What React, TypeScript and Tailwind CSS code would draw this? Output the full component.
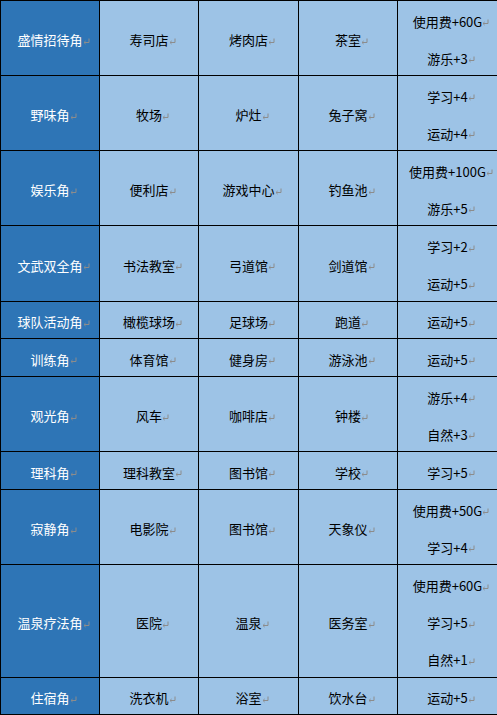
import React from "react"

interface Row {
  name: string
  places: string[]
  effects: string[]
}

const rows: Row[] = [
  { name: "盛情招待角", places: ["寿司店", "烤肉店", "茶室"], effects: ["使用费+60G", "游乐+3"] },
  { name: "野味角", places: ["牧场", "炉灶", "兔子窝"], effects: ["学习+4", "运动+4"] },
  { name: "娱乐角", places: ["便利店", "游戏中心", "钓鱼池"], effects: ["使用费+100G", "游乐+5"] },
  { name: "文武双全角", places: ["书法教室", "弓道馆", "剑道馆"], effects: ["学习+2", "运动+5"] },
  { name: "球队活动角", places: ["橄榄球场", "足球场", "跑道"], effects: ["运动+5"] },
  { name: "训练角", places: ["体育馆", "健身房", "游泳池"], effects: ["运动+5"] },
  { name: "观光角", places: ["风车", "咖啡店", "钟楼"], effects: ["游乐+4", "自然+3"] },
  { name: "理科角", places: ["理科教室", "图书馆", "学校"], effects: ["学习+5"] },
  { name: "寂静角", places: ["电影院", "图书馆", "天象仪"], effects: ["使用费+50G", "学习+4"] },
  { name: "温泉疗法角", places: ["医院", "温泉", "医务室"], effects: ["使用费+60G", "学习+5", "自然+1"] },
  { name: "住宿角", places: ["洗衣机", "浴室", "饮水台"], effects: ["运动+5"] },
]

// Word-style paragraph mark, kept out of the centering width
function Mark() {
  return (
    <span className="inline-block w-[7px] -mr-[7px] align-middle">
      <svg width="7" height="7" viewBox="0 0 7 7" className="block">
        <path d="M6 0.5 V4.5 H1.2" fill="none" stroke="#8c8c8c" strokeWidth="1" />
        <path d="M2.6 3 L1 4.5 L2.6 6" fill="none" stroke="#8c8c8c" strokeWidth="1" />
      </svg>
    </span>
  )
}

function Text({ children }: { children: string }) {
  return (
    <span className="whitespace-nowrap">
      {children}
      <Mark />
    </span>
  )
}

export default function App() {
  return (
    <div
      className="w-[497px] h-[715px] overflow-hidden bg-black pt-px pl-px pb-px grid grid-cols-[98px_98px_99px_98px_99px] grid-rows-[74px_74px_74px_75px_36px_37px_74px_37px_74px_112px_36px] gap-px text-[13px] leading-none"
      style={{ fontFamily: '"Noto Sans CJK SC", "Noto Sans", sans-serif' }}
    >
      {rows.map((r) => (
        <React.Fragment key={r.name}>
          <div className="bg-[#2e75b6] text-white flex items-center justify-center pt-[3px]">
            <Text>{r.name}</Text>
          </div>
          {r.places.map((p, i) => (
            <div
              key={i}
              className="bg-[#9dc3e6] text-black flex items-center justify-center pt-[3px]"
            >
              <Text>{p}</Text>
            </div>
          ))}
          <div className="bg-[#9dc3e6] text-black flex flex-col">
            {r.effects.map((e, i) => (
              <div key={i} className="flex-1 flex items-center justify-center pt-[3px]">
                <Text>{e}</Text>
              </div>
            ))}
          </div>
        </React.Fragment>
      ))}
    </div>
  )
}
